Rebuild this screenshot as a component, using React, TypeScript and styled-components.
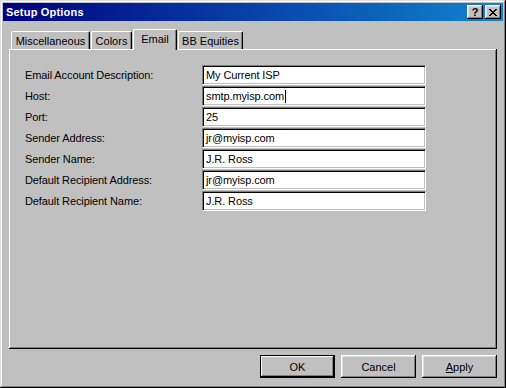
import styled, { createGlobalStyle } from "styled-components";

const GlobalStyle = createGlobalStyle`
  html, body {
    margin: 0;
    padding: 0;
    background: #c0c0c0;
  }
  * {
    box-sizing: border-box;
  }
`;

const fields = [
  { label: "Email Account Description:", value: "My Current ISP" },
  { label: "Host:", value: "smtp.myisp.com", caret: true },
  { label: "Port:", value: "25" },
  { label: "Sender Address:", value: "jr@myisp.com" },
  { label: "Sender Name:", value: "J.R. Ross" },
  { label: "Default Recipient Address:", value: "jr@myisp.com" },
  { label: "Default Recipient Name:", value: "J.R. Ross" },
];

const tabs = [
  { name: "Miscellaneous", width: 79 },
  { name: "Colors", width: 41 },
  { name: "Email", width: 44 },
  { name: "BB Equities", width: 65 },
];

function App() {
  return (
    <>
      <GlobalStyle />
      <Window>
        <TitleBar>
          <Title>Setup Options</Title>
          <CaptionButtons>
            <CaptionButton>?</CaptionButton>
            <CaptionButton>
              <svg width="8" height="7" viewBox="0 0 8 7">
                <path
                  d="M0 0h2v1h1v1h2V1h1V0h2v1H7v1H6v1H5v1h1v1h1v1h1v1H6V6H5V5H3v1H2v1H0V6h1V5h1V4h1V3H2V2H1V1H0z"
                  fill="#000"
                />
              </svg>
            </CaptionButton>
          </CaptionButtons>
        </TitleBar>
        <Body>
          <TabStrip>
            {tabs.map((t) => (
              <Tab key={t.name} $active={t.name === "Email"} $width={t.width}>
                {t.name}
              </Tab>
            ))}
          </TabStrip>
          <Panel>
            <Form>
              {fields.map((f) => (
                <Row key={f.label}>
                  <Label>{f.label}</Label>
                  <Field>
                    {f.value}
                    {f.caret && <Caret />}
                  </Field>
                </Row>
              ))}
            </Form>
          </Panel>
          <Footer>
            <Button $default>OK</Button>
            <Button>Cancel</Button>
            <Button>
              <u>A</u>pply
            </Button>
          </Footer>
        </Body>
      </Window>
    </>
  );
}

const Window = styled.div`
  width: 506px;
  height: 388px;
  padding: 3px;
  display: flex;
  flex-direction: column;
  background: #c0c0c0;
  box-shadow: inset -1px -1px #000, inset 1px 1px #dfdfdf,
    inset -2px -2px #808080, inset 2px 2px #fff;
  font-family: "Liberation Sans", Arial, sans-serif;
  font-size: 11px;
  color: #000;
`;

const TitleBar = styled.div`
  height: 18px;
  display: flex;
  align-items: center;
  justify-content: space-between;
  padding: 0 2px 0 3px;
  background: linear-gradient(90deg, #000080, #1084d0);
`;

const Title = styled.span`
  color: #fff;
  font-weight: bold;
  font-size: 11px;
  letter-spacing: 0.2px;
`;

const CaptionButtons = styled.div`
  display: flex;
  gap: 2px;
`;

const CaptionButton = styled.div`
  width: 16px;
  height: 14px;
  display: flex;
  align-items: center;
  justify-content: center;
  background: #c0c0c0;
  font-weight: bold;
  font-size: 11px;
  line-height: 1;
  box-shadow: inset -1px -1px #000, inset 1px 1px #fff,
    inset -2px -2px #808080, inset 2px 2px #dfdfdf;
`;

const Body = styled.div`
  flex: 1;
  display: flex;
  flex-direction: column;
  padding: 8px 6px 0 6px;
`;

const TabStrip = styled.div`
  display: flex;
  align-items: flex-end;
  height: 20px;
  padding-left: 2px;
  position: relative;
  z-index: 1;
`;

const Tab = styled.div<{ $active?: boolean; $width: number }>`
  width: ${(p) => p.$width}px;
  height: ${(p) => (p.$active ? 21 : 18)}px;
  margin-bottom: ${(p) => (p.$active ? -1 : 0)}px;
  margin-right: 1px;
  display: flex;
  align-items: center;
  justify-content: center;
  padding-bottom: ${(p) => (p.$active ? 2 : 0)}px;
  background: #c0c0c0;
  border-top: 1px solid #fff;
  border-left: 1px solid #fff;
  border-right: 1px solid #000;
  border-radius: 2px 2px 0 0;
  box-shadow: inset -1px 0 #808080;
  font-size: 11px;
`;

const Panel = styled.div`
  height: 300px;
  padding: 16px 0 0 16px;
  background: #c0c0c0;
  box-shadow: inset -1px -1px #000, inset 1px 1px #fff,
    inset -2px -2px #808080;
`;

const Form = styled.div`
  display: flex;
  flex-direction: column;
  gap: 1px;
`;

const Row = styled.div`
  display: grid;
  grid-template-columns: 177px 224px;
  align-items: center;
`;

const Label = styled.span`
  font-size: 11px;
  letter-spacing: -0.1px;
`;

const Field = styled.div`
  height: 20px;
  display: flex;
  align-items: center;
  padding-left: 3px;
  background: #fff;
  border: 1px solid;
  border-color: #808080 #fff #fff #808080;
  box-shadow: inset 1px 1px #000, inset -1px -1px #c0c0c0;
  font-size: 11px;
  letter-spacing: -0.1px;
`;

const Caret = styled.span`
  width: 1px;
  height: 13px;
  margin-left: 1px;
  background: #000;
`;

const Footer = styled.div`
  display: flex;
  justify-content: flex-end;
  gap: 6px;
  padding-top: 6px;
`;

const Button = styled.div<{ $default?: boolean }>`
  width: 75px;
  height: 23px;
  display: flex;
  align-items: center;
  justify-content: center;
  background: #c0c0c0;
  font-size: 11px;
  box-shadow: ${(p) =>
    p.$default
      ? "inset -1px -1px #000, inset 1px 1px #000, inset -2px -2px #000, inset 2px 2px #fff, inset -3px -3px #808080"
      : "inset -1px -1px #000, inset 1px 1px #fff, inset -2px -2px #808080, inset 2px 2px #dfdfdf"};
`;

export default App;
